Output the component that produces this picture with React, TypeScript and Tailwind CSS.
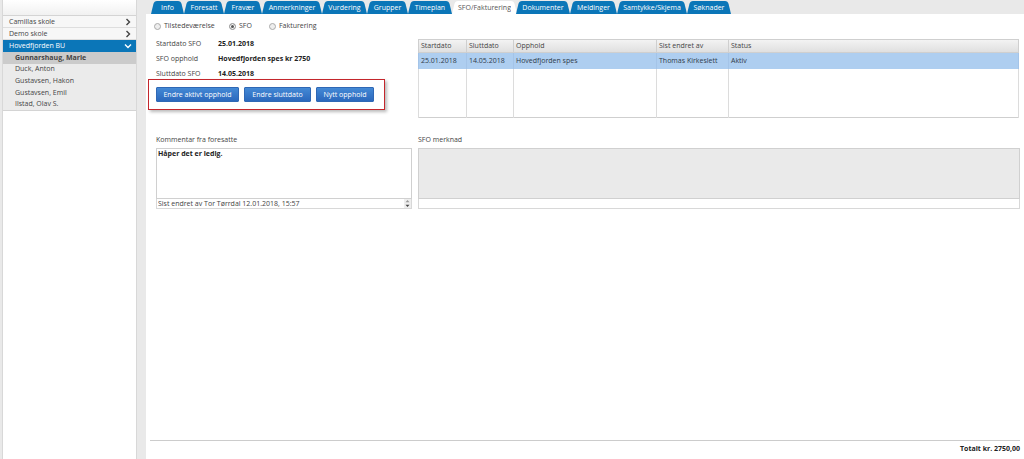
import { useState } from "react"
import clsx from "clsx"

const tabs = [
  { name: "Info", width: "w-[33px]" },
  { name: "Foresatt", width: "w-[40px]" },
  { name: "Fravær", width: "w-[38px]" },
  { name: "Anmerkninger", width: "w-[60px]" },
  { name: "Vurdering", width: "w-[45px]" },
  { name: "Grupper", width: "w-[41px]" },
  { name: "Timeplan", width: "w-[44px]" },
  { name: "SFO/Fakturering", width: "w-[64px]" },
  { name: "Dokumenter", width: "w-[54px]" },
  { name: "Meldinger", width: "w-[47px]" },
  { name: "Samtykke/Skjema", width: "w-[70px]" },
  { name: "Søknader", width: "w-[44px]" },
]

const schools = ["Camillas skole", "Demo skole", "Hovedfjorden BU"]

const pupils = [
  "Gunnarshaug, Marie",
  "Duck, Anton",
  "Gustavsen, Hakon",
  "Gustavsen, Emil",
  "Ilstad, Olav S.",
]

const views = [
  { name: "Tilstedeværelse", width: "w-[75px]" },
  { name: "SFO", width: "w-[40px]" },
  { name: "Fakturering", width: "w-[60px]" },
]

const details = [
  { label: "Startdato SFO", value: "25.01.2018" },
  { label: "SFO opphold", value: "Hovedfjorden spes kr 2750" },
  { label: "Sluttdato SFO", value: "14.05.2018" },
]

const actions = [
  { name: "Endre aktivt opphold", width: "w-[83px]" },
  { name: "Endre sluttdato", width: "w-[67px]" },
  { name: "Nytt opphold", width: "w-[58px]" },
]

const columns = [
  { name: "Startdato", width: "w-[48px]", value: "25.01.2018" },
  { name: "Sluttdato", width: "w-[47px]", value: "14.05.2018" },
  { name: "Opphold", width: "w-[143px]", value: "Hovedfjorden spes" },
  { name: "Sist endret av", width: "w-[72px]", value: "Thomas Kirkeslett" },
  { name: "Status", width: "", value: "Aktiv" },
]

function Chevron({ down }: Readonly<{ down?: boolean }>) {
  return (
    <svg
      viewBox="0 0 8 8"
      className="size-2 fill-none stroke-current"
      strokeWidth="1.4"
      aria-hidden
    >
      <path d={down ? "M1 2.5 L4 5.5 L7 2.5" : "M2.5 1 L5.5 4 L2.5 7"} />
    </svg>
  )
}

function Tab({
  name,
  width,
  active,
  onSelect,
}: Readonly<{
  name: string
  width: string
  active: boolean
  onSelect: () => void
}>) {
  return (
    <button
      type="button"
      role="tab"
      aria-selected={active}
      onClick={onSelect}
      className={clsx(
        "flex h-[13px]",
        width,
        active ? "text-white" : "text-[#0b76b8]",
      )}
    >
      <svg
        viewBox="0 0 6 13"
        className="h-[13px] w-1.5 shrink-0 fill-current"
        aria-hidden
      >
        <path d="M0 13 L2.4 3 Q3.2 0 6 0 V13 Z" />
      </svg>
      <span className="flex h-full flex-1 items-center justify-center bg-current">
        <span className={active ? "text-[#555]" : "text-white"}>{name}</span>
      </span>
      <svg
        viewBox="0 0 6 13"
        className="h-[13px] w-1.5 shrink-0 fill-current"
        aria-hidden
      >
        <path d="M6 13 L3.6 3 Q2.8 0 0 0 V13 Z" />
      </svg>
    </button>
  )
}

function Sidebar() {
  return (
    <nav className="w-[135px] shrink-0 border-x border-[#d8d8d8] bg-white">
      <div className="h-4 border-b border-[#d4d4d4] bg-linear-to-b from-white to-[#f1f1f1]" />
      {schools.map((school, i) => {
        const open = i === schools.length - 1
        return (
          <button
            type="button"
            key={school}
            aria-expanded={open}
            className={clsx(
              "flex h-3 w-full items-center justify-between pr-1 pl-1.5",
              open
                ? "bg-[#0b76b8] text-white"
                : "border-b border-[#dedede] bg-[#f7f7f7]",
            )}
          >
            {school}
            <Chevron down={open} />
          </button>
        )
      })}
      <ul className="grid h-[59px] auto-rows-fr border-b border-[#d4d4d4] bg-[#ebebeb]">
        {pupils.map((pupil, i) => (
          <li
            key={pupil}
            className={clsx(
              "flex items-center pl-3",
              i === 0 && "bg-[#cbcbcb] font-bold",
            )}
          >
            <a href="#">{pupil}</a>
          </li>
        ))}
      </ul>
    </nav>
  )
}

function StayTable() {
  return (
    <table className="h-[79px] w-full table-fixed border-collapse border border-[#cfcfcf] text-left">
      <thead>
        <tr className="h-[13px] bg-linear-to-b from-[#f3f3f3] to-[#dedede]">
          {columns.map((column) => (
            <th
              key={column.name}
              className={clsx(
                "border border-[#cfcfcf] px-0.5 py-0 font-normal",
                column.width,
              )}
            >
              {column.name}
            </th>
          ))}
        </tr>
      </thead>
      <tbody>
        <tr className="h-4 bg-[#aecef0] text-[#2f3b4a]">
          {columns.map((column) => (
            <td
              key={column.name}
              className="border-x border-[#a4c4e8] px-0.5 py-0"
            >
              {column.value}
            </td>
          ))}
        </tr>
        <tr>
          {columns.map((column) => (
            <td key={column.name} className="border-x border-[#dcdcdc]" />
          ))}
        </tr>
      </tbody>
    </table>
  )
}

function Note({
  id,
  label,
  text,
  history,
  disabled,
}: Readonly<{
  id: string
  label: string
  text?: string
  history?: string
  disabled?: boolean
}>) {
  return (
    <div className="flex flex-col">
      <label htmlFor={id} className="mb-[3px]">
        {label}
      </label>
      <textarea
        id={id}
        defaultValue={text}
        disabled={disabled}
        className={clsx(
          "h-[51px] resize-none border border-[#d0d0d0] px-px font-bold text-[#222]",
          disabled ? "bg-[#eaeaea]" : "bg-white",
        )}
      />
      <div className="relative flex">
        <select
          aria-label={`${label}, historikk`}
          className="h-2.5 w-full appearance-none border border-t-0 border-[#d8d8d8] bg-white px-px"
        >
          <option>{history}</option>
        </select>
        {history && (
          <svg
            viewBox="0 0 7 9"
            className="pointer-events-none absolute top-0 right-px h-[9px] w-[7px]"
            aria-hidden
          >
            <path d="M0 0 H7 V9 H0 Z" fill="#eeeeee" />
            <path d="M1.5 3.2 L3.5 1 L5.5 3.2 Z" fill="#999" />
            <path d="M1.5 5.8 L3.5 8 L5.5 5.8 Z" fill="#444" />
          </svg>
        )}
      </div>
    </div>
  )
}

export default function App() {
  const [tab, setTab] = useState("SFO/Fakturering")
  const [view, setView] = useState("SFO")

  return (
    <div className="flex min-h-screen gap-[9px] bg-[#e9e9e9] pl-0.5 font-['Open_Sans','Noto_Sans',sans-serif] text-[7px] leading-[10px] text-[#444]">
      <Sidebar />

      <div className="flex min-w-0 flex-1 flex-col">
        <div role="tablist" className="flex pt-px pl-[5px]">
          {tabs.map(({ name, width }) => (
            <Tab
              key={name}
              name={name}
              width={width}
              active={name === tab}
              onSelect={() => setTab(name)}
            />
          ))}
        </div>

        <main className="flex flex-1 flex-col bg-white pr-1 pl-0.5">
          <div className="grid grid-cols-[270px_1fr]">
            <div className="pt-[7px]">
              <div className="flex pl-1.5">
                {views.map(({ name, width }) => (
                  <label
                    key={name}
                    className={clsx("flex items-center gap-[3px]", width)}
                  >
                    <input
                      type="radio"
                      name="view"
                      checked={view === name}
                      onChange={() => setView(name)}
                      className="size-[7px] shrink-0 appearance-none rounded-full border border-[#aaa] bg-[#eee] checked:bg-[#555] checked:inset-ring checked:inset-ring-white"
                    />
                    {name}
                  </label>
                ))}
              </div>

              <dl className="mt-2 flex flex-col gap-[5px] pl-2">
                {details.map(({ label, value }) => (
                  <div key={label} className="flex">
                    <dt className="w-[62px]">{label}</dt>
                    <dd className="font-bold text-[#222]">{value}</dd>
                  </div>
                ))}
              </dl>

              <div className="flex h-[31px] w-[237px] items-center gap-[5px] border border-[#c4262c] pl-[7px] shadow-[2px_2px_3px_#bbb]">
                {actions.map(({ name, width }) => (
                  <button
                    type="button"
                    key={name}
                    className={clsx(
                      "h-[15px] rounded-[1px] border border-[#2f68b5] bg-linear-to-b from-[#4489d5] to-[#2b68bd] text-white",
                      width,
                    )}
                  >
                    {name}
                  </button>
                ))}
              </div>
            </div>

            <div className="pt-[25px] pr-px">
              <StayTable />
            </div>
          </div>

          <div className="mt-[17px] grid grid-cols-[256px_1fr] gap-1.5 pl-2">
            <Note
              id="comment"
              label="Kommentar fra foresatte"
              text="Håper det er ledig."
              history="Sist endret av Tor Tørrdal 12.01.2018, 15:57"
            />
            <Note id="note" label="SFO merknad" disabled />
          </div>

          <footer className="mt-auto ml-0.5 h-[19px] border-t border-[#ccc] pt-[3px] text-right font-bold text-[#222]">
            Totalt kr. 2750,00
          </footer>
        </main>
      </div>
    </div>
  )
}
